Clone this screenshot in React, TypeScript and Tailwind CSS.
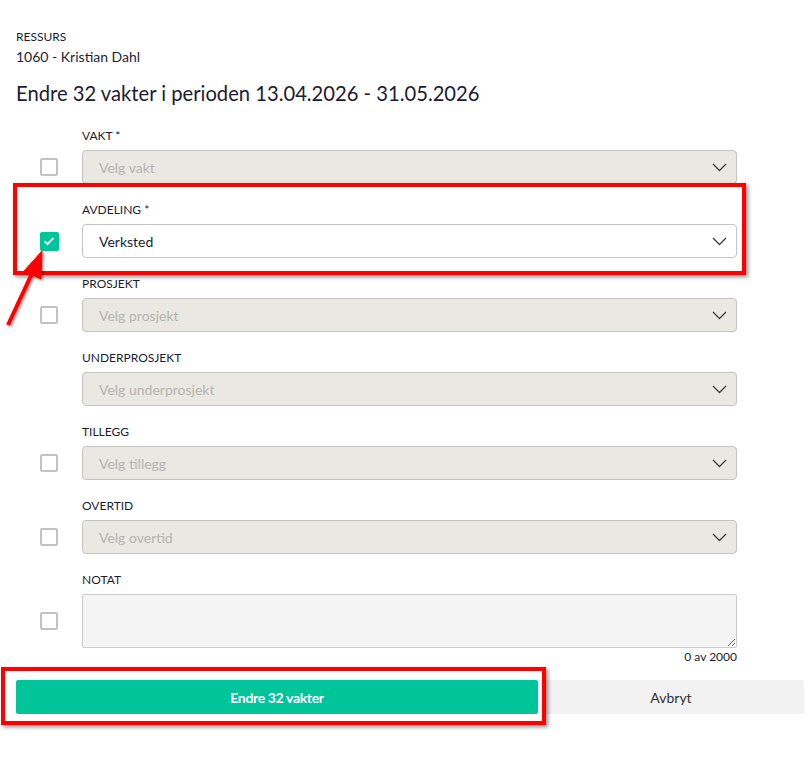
import React from "react";

type Field = {
  label: string;
  placeholder?: string;
  value?: string;
  checkbox: boolean;
  checked?: boolean;
};

const fields: Field[] = [
  { label: "VAKT *", placeholder: "Velg vakt", checkbox: true },
  { label: "AVDELING *", value: "Verksted", checkbox: true, checked: true },
  { label: "PROSJEKT", placeholder: "Velg prosjekt", checkbox: true },
  { label: "UNDERPROSJEKT", placeholder: "Velg underprosjekt", checkbox: false },
  { label: "TILLEGG", placeholder: "Velg tillegg", checkbox: true },
  { label: "OVERTID", placeholder: "Velg overtid", checkbox: true },
];

function Chevron() {
  return (
    <svg width="15" height="9" viewBox="0 0 15 9" fill="none" className="shrink-0">
      <path d="M1 1l6.5 6.5L14 1" stroke="#3f3f3f" strokeWidth="1.3" />
    </svg>
  );
}

function Checkbox({ checked }: { checked?: boolean }) {
  if (checked) {
    return (
      <div className="w-[19px] h-[19px] rounded-[2px] bg-[#00c49a] flex items-center justify-center">
        <svg width="12" height="10" viewBox="0 0 12 10" fill="none">
          <path d="M1.5 5.2l3 3L10.5 1.8" stroke="white" strokeWidth="1.8" />
        </svg>
      </div>
    );
  }
  return <div className="w-[18px] h-[18px] rounded-[2px] border-2 border-[#c2c2c2] bg-white" />;
}

function SelectRow({ field }: { field: Field }) {
  const enabled = !!field.value;
  return (
    <div className="flex flex-col mb-[18px]">
      <div className="pl-[66px] h-[15px] text-[12px] leading-[15px] text-[#1c1d33] mb-[7px]">{field.label}</div>
      <div className="flex items-center">
        <div className="w-[66px] flex justify-center">{field.checkbox && <Checkbox checked={field.checked} />}</div>
        <div
          className={`flex-1 h-[34px] rounded-[4px] border border-[#c4c4c4] flex items-center justify-between pl-4 pr-[4px] ${
            enabled ? "bg-white" : "bg-[#e9e8e2]"
          }`}
        >
          <span className={`text-[14px] ${enabled ? "text-[#1c1d33]" : "text-[#b5b5b1]"}`}>
            {field.value ?? field.placeholder}
          </span>
          <div className="w-[26px] flex justify-center">
            <Chevron />
          </div>
        </div>
      </div>
    </div>
  );
}

export default function App() {
  return (
    <div className="relative w-[812px] h-[774px] bg-white overflow-hidden" style={{ fontFamily: "Lato, 'Open Sans', sans-serif" }}>
      <div className="pt-[29px] pl-4 pr-[75px]">
        <div className="text-[12px] leading-4 text-[#1c1d33]">RESSURS</div>
        <div className="text-[14px] leading-5 mt-[2px] text-[#1c1d33]">1060 - Kristian Dahl</div>
        <h1 className="text-[20.2px] leading-7 mt-3 text-[#1c1d33]">Endre 32 vakter i perioden 13.04.2026 - 31.05.2026</h1>

        <div className="mt-[21px]">
          {fields.map((f) => (
            <SelectRow key={f.label} field={f} />
          ))}

          <div className="flex flex-col">
            <div className="pl-[66px] h-[15px] text-[12px] leading-[15px] text-[#1c1d33] mb-[7px]">NOTAT</div>
            <div className="flex items-center">
              <div className="w-[66px] flex justify-center">
                <Checkbox />
              </div>
              <textarea
                readOnly
                className="flex-1 h-[54px] rounded-[2px] border border-[#cbcbcb] bg-[#f4f4f4] resize-y outline-none"
              />
            </div>
            <div className="text-right text-[12px] leading-[14px] mt-[2px] text-[#1c1d33]">0 av 2000</div>
          </div>
        </div>
      </div>

      <div className="flex mt-[16px] pl-4 pr-2">
        <button className="w-[522px] h-[34px] rounded-[2px] bg-[#00c49a] text-white text-[14px] font-bold tracking-tight">
          Endre 32 vakter
        </button>
        <button className="flex-1 h-[34px] rounded-[2px] bg-[#f2f2f2] text-[#333] text-[14px]">Avbryt</button>
      </div>

      {/* red callouts */}
      <div className="absolute left-[13px] top-[183px] w-[733px] h-[92px] border-4 border-[#ff0000] shadow-[2px_2px_4px_rgba(0,0,0,0.45)] pointer-events-none" />
      <div className="absolute left-[1px] top-[667px] w-[545px] h-[58px] border-4 border-[#ff0000] shadow-[2px_2px_4px_rgba(0,0,0,0.45)] pointer-events-none" />
      <svg className="absolute left-0 top-[245px] pointer-events-none" width="60" height="90" viewBox="0 0 60 90">
        <defs>
          <filter id="sh" x="-20%" y="-20%" width="140%" height="140%">
            <feDropShadow dx="1.5" dy="1.5" stdDeviation="1.2" floodColor="#000" floodOpacity="0.4" />
          </filter>
        </defs>
        <g filter="url(#sh)" fill="#ff0000" stroke="#ff0000">
          <line x1="8" y1="80" x2="34" y2="24" strokeWidth="4" />
          <polygon points="42,6 41,34 24,26" strokeWidth="1" />
        </g>
      </svg>
    </div>
  );
}
